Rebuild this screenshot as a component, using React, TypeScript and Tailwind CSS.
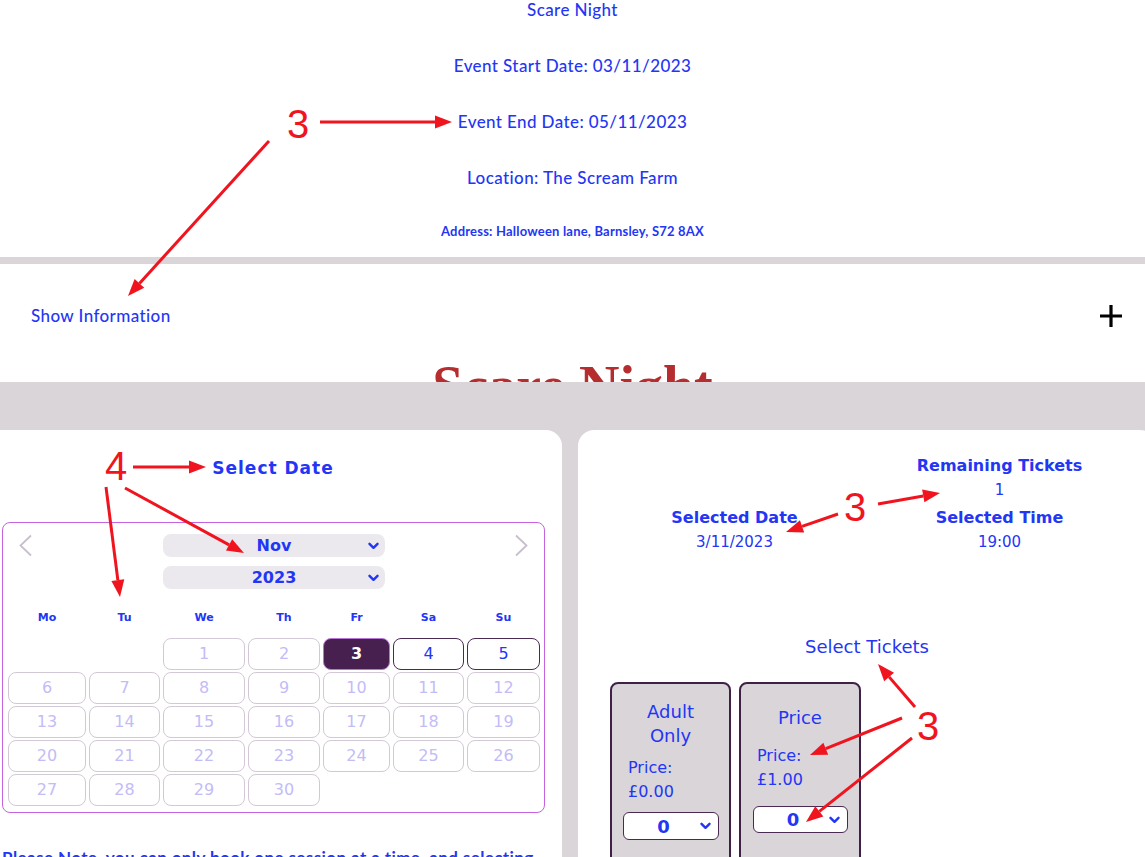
import React from 'react';

const days = Array.from({ length: 30 }, (_, i) => i + 1);
const weekdays = ['Mo', 'Tu', 'We', 'Th', 'Fr', 'Sa', 'Su'];

// Nov 2023 starts on a Wednesday
const LEAD = 2;

function Chevron({ className = '' }: { className?: string }) {
  return (
    <svg width="11" height="8" viewBox="0 0 11 8" className={className}>
      <path d="M1.5 1.8 L5.5 5.8 L9.5 1.8" fill="none" stroke="#2336f5" strokeWidth="2.4" strokeLinecap="round" strokeLinejoin="round" />
    </svg>
  );
}

function NavArrow({ dir }: { dir: 'left' | 'right' }) {
  return (
    <svg width="15" height="23" viewBox="0 0 15 23">
      <path
        d={dir === 'left' ? 'M13 1.5 L2.5 11.5 L13 21.5' : 'M2 1.5 L12.5 11.5 L2 21.5'}
        fill="none"
        stroke="#c7bfcc"
        strokeWidth="1.8"
      />
    </svg>
  );
}

function DayCell({ day }: { day: number }) {
  if (day === 3) {
    return (
      <div className="h-[32px] rounded-[8px] border border-[#b877d4] bg-[#47204f] flex items-center justify-center text-white font-bold text-[16px]">
        {day}
      </div>
    );
  }
  if (day === 4 || day === 5) {
    return (
      <div className="h-[32px] rounded-[8px] border-[1.5px] border-[#4a2a52] bg-white flex items-center justify-center text-[#2336f5] text-[16px]">
        {day}
      </div>
    );
  }
  return (
    <div className="h-[32px] rounded-[8px] border border-[#d3c8d6] bg-white flex items-center justify-center text-[#c3bcf6] text-[16px]">
      {day}
    </div>
  );
}

function TicketSelect({ w, h }: { w: string; h: string }) {
  return (
    <div className={`relative self-center ${w} ${h} bg-white border border-[#4a2a52] rounded-[6px] flex items-center justify-center`}>
      <span className="font-bold text-[18px] text-[#2336f5] pr-[14px]">0</span>
      <Chevron className="absolute right-[7px] top-1/2 -translate-y-1/2" />
    </div>
  );
}

function Arrow({ x1, y1, x2, y2 }: { x1: number; y1: number; x2: number; y2: number }) {
  const a = Math.atan2(y2 - y1, x2 - x1);
  const L = 17;
  const W = 6.5;
  const bx = x2 - L * Math.cos(a);
  const by = y2 - L * Math.sin(a);
  const p1 = `${bx + W * Math.sin(a)},${by - W * Math.cos(a)}`;
  const p2 = `${bx - W * Math.sin(a)},${by + W * Math.cos(a)}`;
  return (
    <g>
      <line x1={x1} y1={y1} x2={bx} y2={by} stroke="#f0141e" strokeWidth="3" />
      <polygon points={`${x2},${y2} ${p1} ${p2}`} fill="#f0141e" />
    </g>
  );
}

function Annotations() {
  return (
    <svg className="absolute top-0 left-0 pointer-events-none z-20" width="1145" height="857" viewBox="0 0 1145 857">
      <g fontFamily="'Liberation Sans', Arial, sans-serif" fontSize="40" fill="#f0141e" textAnchor="middle">
        <text x="298" y="138">3</text>
        <text x="116" y="480">4</text>
        <text x="855" y="521">3</text>
        <text x="928" y="740">3</text>
      </g>
      <Arrow x1={320} y1={122} x2={452} y2={122} />
      <Arrow x1={269} y1={141} x2={128} y2={296} />
      <Arrow x1={133} y1={467} x2={206} y2={467} />
      <Arrow x1={106} y1={487} x2={120} y2={597} />
      <Arrow x1={125} y1={488} x2={244} y2={553} />
      <Arrow x1={838} y1={514} x2={786} y2={532} />
      <Arrow x1={878} y1={504} x2={940} y2={493} />
      <Arrow x1={915} y1={707} x2={878} y2={664} />
      <Arrow x1={902} y1={718} x2={810} y2={755} />
      <Arrow x1={912} y1={738} x2={806} y2={822} />
    </svg>
  );
}

export default function App() {
  const cols = 'grid grid-cols-[78px_71px_82px_72px_67px_71px_73px] gap-x-[3px]';

  return (
    <div className="relative min-h-screen w-full overflow-hidden bg-white">
      {/* event details */}
      <section className="-mt-[2px] pb-[17px] flex flex-col items-center gap-8 font-['Lato',sans-serif] text-[#2336f5] font-medium tracking-[0.4px]">
        <p className="text-[17px] leading-6">Scare Night</p>
        <p className="text-[17px] leading-6">Event Start Date: 03/11/2023</p>
        <p className="text-[17px] leading-6">Event End Date: 05/11/2023</p>
        <p className="text-[17px] leading-6">Location: The Scream Farm</p>
        <p className="text-[13px] leading-[18px] font-bold tracking-[0.2px]">Address: Halloween lane, Barnsley, S72 8AX</p>
      </section>

      <div className="h-[7px] bg-[#d9d5d9]" />

      <div className="h-[104px] flex items-center justify-between pl-[31px] pr-[22px] font-['Lato',sans-serif]">
        <span className="text-[17px] font-medium tracking-[0.4px] text-[#2336f5]">Show Information</span>
        <svg width="24" height="24" viewBox="0 0 24 24">
          <path d="M12 1v22M1 12h22" stroke="#000" strokeWidth="3.2" />
        </svg>
      </div>

      <h1 className="-mt-[10px] text-center text-[56px] leading-none font-bold text-[#b62d2f] font-['Liberation_Serif',serif]">
        Scare Night
      </h1>

      {/* booking area */}
      <section className="relative z-10 -mt-[32px] bg-[#d9d5d9] pt-[48px] font-['DejaVu_Sans',sans-serif] text-[#2336f5]">
        <div className="flex gap-4 -ml-[16px]">
          {/* date picker card */}
          <div className="w-[578px] shrink-0 bg-white rounded-[16px] pt-[26px] pb-10 min-h-[480px]">
            <h2 className="text-center text-[17px] leading-6 font-bold tracking-[1px]">Select Date</h2>

            <div className="mt-[42px] ml-[18px] w-[543px] border border-[#c462e0] rounded-[8px] pt-[11px] pb-[6px] pl-[5px] pr-[4px]">
              <div className={cols}>
                <div className="h-[23px] flex items-center pl-[10px]">
                  <NavArrow dir="left" />
                </div>
                <div />
                <div className="col-span-3 flex flex-col gap-[9px]">
                  <div className="relative w-[222px] h-[23px] rounded-[8px] bg-[#ebe9ed] flex items-center justify-center">
                    <span className="text-[16px] font-bold">Nov</span>
                    <Chevron className="absolute right-[6px] top-1/2 -translate-y-1/2" />
                  </div>
                  <div className="relative w-[222px] h-[23px] rounded-[8px] bg-[#ebe9ed] flex items-center justify-center">
                    <span className="text-[16px] font-bold">2023</span>
                    <Chevron className="absolute right-[6px] top-1/2 -translate-y-1/2" />
                  </div>
                </div>
                <div />
                <div className="h-[23px] flex items-center justify-end pr-[11px]">
                  <NavArrow dir="right" />
                </div>
              </div>

              <div className={`${cols} mt-[21px]`}>
                {weekdays.map((d) => (
                  <div key={d} className="text-center text-[11px] leading-4 font-bold">
                    {d}
                  </div>
                ))}
              </div>

              <div className={`${cols} gap-y-[2px] mt-[12px]`}>
                {Array.from({ length: LEAD }, (_, i) => (
                  <div key={`e${i}`} />
                ))}
                {days.map((d) => (
                  <DayCell key={d} day={d} />
                ))}
              </div>
            </div>

            <p className="mt-[33px] ml-[18px] w-[543px] text-[17px] leading-6 font-bold font-['Lato',sans-serif] tracking-[0.4px]">
              Please Note, you can only book one session at a time, and selecting another date will clear your current selection.
            </p>
          </div>

          {/* ticket card */}
          <div className="w-[578px] shrink-0 bg-white rounded-[16px] pt-[24px] pb-10 min-h-[480px]">
            <div className="grid grid-cols-2 px-[24px] items-end text-center">
              <div>
                <p className="text-[16px] leading-6 font-bold">Selected Date</p>
                <p className="text-[15px] leading-6">3/11/2023</p>
              </div>
              <div>
                <p className="text-[16px] leading-6 font-bold">Remaining Tickets</p>
                <p className="text-[15px] leading-6">1</p>
                <p className="mt-[4px] text-[16px] leading-6 font-bold">Selected Time</p>
                <p className="text-[15px] leading-6">19:00</p>
              </div>
            </div>

            <p className="mt-[81px] text-center text-[18px] leading-6">Select Tickets</p>

            <div className="mt-[23px] pl-[32px] flex gap-2 items-start">
              <div className="w-[121px] min-h-[200px] border-2 border-[#3e2147] rounded-[8px] bg-[#d9d5d9] px-[16px] pt-[16px] flex flex-col gap-2">
                <p className="text-center text-[18px] leading-6">
                  Adult
                  <br />
                  Only
                </p>
                <p className="text-[16px] leading-6">
                  Price:
                  <br />
                  £0.00
                </p>
                <TicketSelect w="w-[96px]" h="h-[28px]" />
              </div>
              <div className="w-[122px] min-h-[200px] border-2 border-[#3e2147] rounded-[8px] bg-[#d9d5d9] px-[16px] pt-[22px] flex flex-col gap-[14px]">
                <p className="text-center text-[18px] leading-6">Price</p>
                <p className="text-[16px] leading-6">
                  Price:
                  <br />
                  £1.00
                </p>
                <TicketSelect w="w-[95px]" h="h-[27px]" />
              </div>
            </div>
          </div>
        </div>
      </section>

      <Annotations />
    </div>
  );
}
